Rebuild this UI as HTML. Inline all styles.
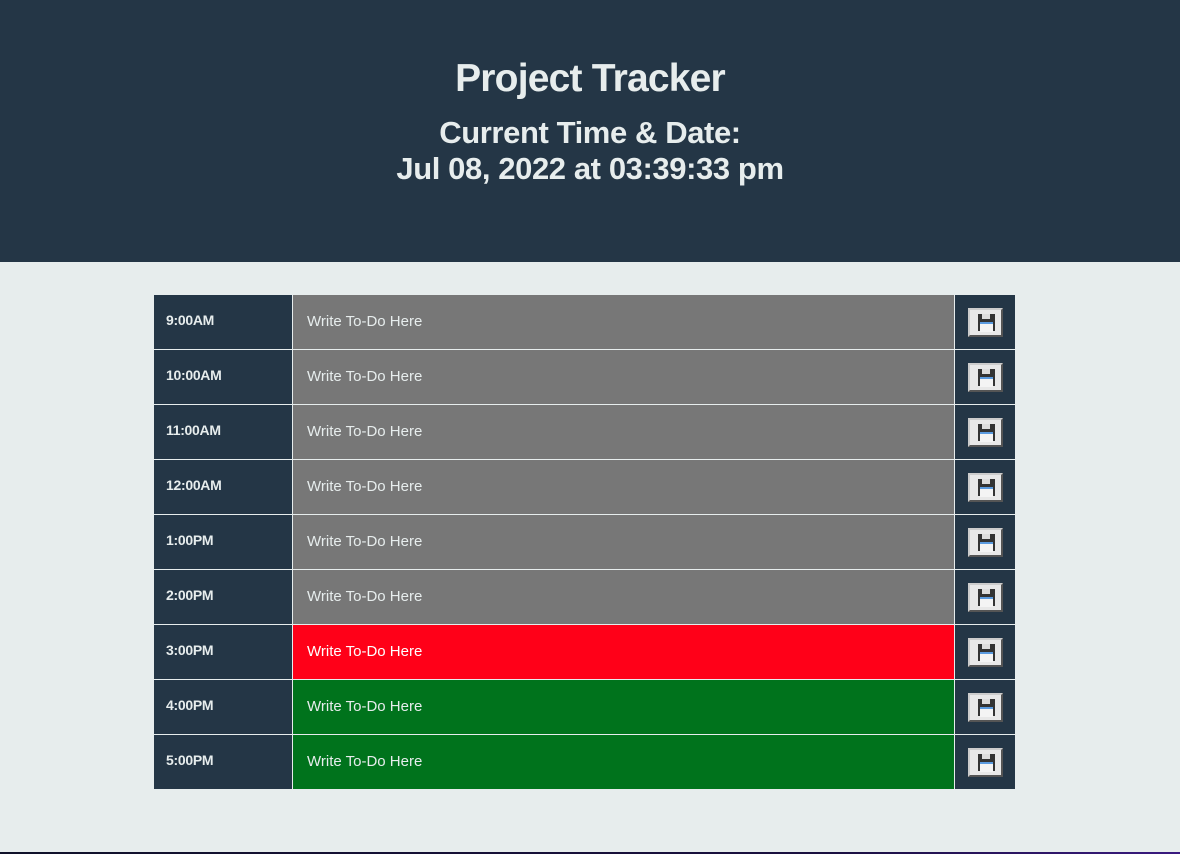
<!DOCTYPE html>
<html><head><style>
*{margin:0;padding:0;box-sizing:border-box}
body{width:1180px;height:854px;background:#e7eded;font-family:"Liberation Sans",sans-serif;position:relative;overflow:hidden}
header{position:absolute;left:0;top:0;width:1180px;height:262px;background:#243646;color:#e7eded;text-align:center;font-weight:bold}
h1{position:absolute;top:57px;width:100%;font-size:39px;letter-spacing:-0.8px}
.h2a{position:absolute;top:115px;width:100%;font-size:31px;letter-spacing:-0.4px}
.h2b{position:absolute;top:151px;width:100%;font-size:31px;letter-spacing:-0.4px}
.row{position:absolute;left:154px;width:861px;height:55px}
.t{position:absolute;left:0;top:0;width:138px;height:54px;background:#243646;color:#e7eded;font-weight:bold;font-size:14px;padding:17px 0 0 12px;letter-spacing:-0.3px}
.d{position:absolute;left:139px;top:0;width:661px;height:54px;color:#e7eded;font-size:15px;padding:18px 0 0 14px;letter-spacing:0px}
.b{position:absolute;left:801px;top:0;width:60px;height:54px;background:#243646}
.ic{position:absolute;left:13px;top:13px;width:35px;height:29px;background:#e8e8e8;border:2px solid #555;border-top-color:#ccc;border-left-color:#ccc}
.fl{position:absolute;left:8px;top:4px;width:17px;height:17px;background:#333}
.fl::before{content:"";position:absolute;left:4px;top:0;width:8px;height:5px;background:#ddd}
.fl::after{content:"";position:absolute;left:2px;top:8px;width:13px;height:8px;background:#f4f4f4;border-top:2px solid #5b9be0}
.line{position:absolute;left:0;top:852px;width:1180px;height:2px;background:linear-gradient(90deg,#10112a,#1a1040 70%,#3a1a80)}
</style></head><body>
<header><h1>Project Tracker</h1><div class="h2a">Current Time &amp; Date:</div><div class="h2b">Jul 08, 2022 at 03:39:33 pm</div></header>
<div class="row" style="top:295px"><div class="t">9:00AM</div><div class="d" style="background:#777">Write To-Do Here</div><div class="b"><div class="ic"><div class="fl"></div></div></div></div>
<div class="row" style="top:350px"><div class="t">10:00AM</div><div class="d" style="background:#777">Write To-Do Here</div><div class="b"><div class="ic"><div class="fl"></div></div></div></div>
<div class="row" style="top:405px"><div class="t">11:00AM</div><div class="d" style="background:#777">Write To-Do Here</div><div class="b"><div class="ic"><div class="fl"></div></div></div></div>
<div class="row" style="top:460px"><div class="t">12:00AM</div><div class="d" style="background:#777">Write To-Do Here</div><div class="b"><div class="ic"><div class="fl"></div></div></div></div>
<div class="row" style="top:515px"><div class="t">1:00PM</div><div class="d" style="background:#777">Write To-Do Here</div><div class="b"><div class="ic"><div class="fl"></div></div></div></div>
<div class="row" style="top:570px"><div class="t">2:00PM</div><div class="d" style="background:#777">Write To-Do Here</div><div class="b"><div class="ic"><div class="fl"></div></div></div></div>
<div class="row" style="top:625px"><div class="t">3:00PM</div><div class="d" style="background:#ff0018;color:#fff">Write To-Do Here</div><div class="b"><div class="ic"><div class="fl"></div></div></div></div>
<div class="row" style="top:680px"><div class="t">4:00PM</div><div class="d" style="background:#00731c">Write To-Do Here</div><div class="b"><div class="ic"><div class="fl"></div></div></div></div>
<div class="row" style="top:735px"><div class="t">5:00PM</div><div class="d" style="background:#00731c">Write To-Do Here</div><div class="b"><div class="ic"><div class="fl"></div></div></div></div>
<div class="line"></div>
</body></html>
